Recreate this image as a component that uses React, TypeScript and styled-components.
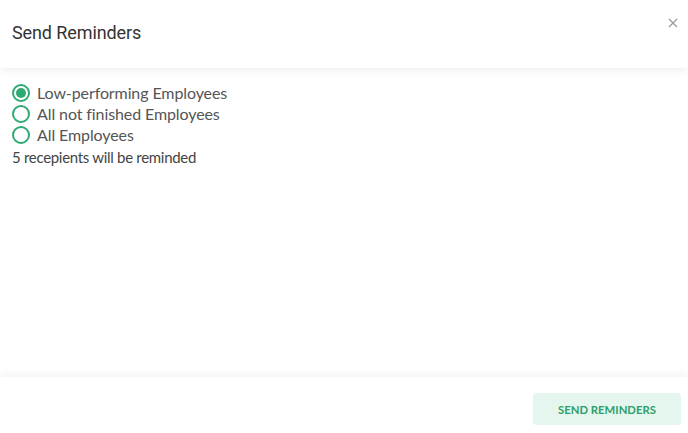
import { useState } from "react";
import styled, { createGlobalStyle } from "styled-components";

const GlobalStyle = createGlobalStyle`
  html, body {
    margin: 0;
    padding: 0;
    background: #fff;
  }
  body {
    font-family: Lato, "Noto Sans", sans-serif;
  }
`;

const options = [
  "Low-performing Employees",
  "All not finished Employees",
  "All Employees",
];

export default function App() {
  const [selected, setSelected] = useState(0);
  return (
    <Modal>
      <GlobalStyle />
      <Header>
        <Title>Send Reminders</Title>
        <Close aria-label="close">
          <svg width="10" height="10" viewBox="0 0 10 10">
            <path d="M1 1L9 9M9 1L1 9" stroke="#9a9a9a" strokeWidth="1.2" />
          </svg>
        </Close>
      </Header>
      <Body>
        {options.map((label, index) => (
          <Option key={index} onClick={() => setSelected(index)}>
            <Radio checked={selected === index} />
            <span>{label}</span>
          </Option>
        ))}
        <Note>5 recepients will be reminded</Note>
      </Body>
      <Footer>
        <SendButton>SEND REMINDERS</SendButton>
      </Footer>
    </Modal>
  );
}

const Modal = styled.div`
  width: 688px;
  height: 433px;
  display: flex;
  flex-direction: column;
  background: #fff;
  overflow: hidden;
`;

const Header = styled.div`
  height: 68px;
  flex-shrink: 0;
  display: flex;
  align-items: center;
  justify-content: space-between;
  padding: 0 10px 3px 12px;
  box-sizing: border-box;
  position: relative;
  z-index: 1;
  box-shadow: 0 3px 8px rgba(0, 0, 0, 0.06);
`;

const Title = styled.h2`
  margin: 0;
  font-family: Roboto, "Noto Sans", sans-serif;
  font-weight: 400;
  font-size: 18px;
  letter-spacing: -0.1px;
  color: #333;
`;

const Close = styled.button`
  align-self: flex-start;
  margin-top: 16px;
  border: none;
  background: none;
  padding: 0;
  cursor: pointer;
`;

const Body = styled.div`
  flex: 1;
  padding: 14px 12px 0;
  display: flex;
  flex-direction: column;
`;

const Option = styled.label`
  display: flex;
  align-items: center;
  gap: 7px;
  height: 21px;
  font-size: 16px;
  letter-spacing: -0.1px;
  color: #555;
  cursor: pointer;
`;

const Radio = styled.span<{ checked: boolean }>`
  width: 18px;
  height: 18px;
  box-sizing: border-box;
  border-radius: 50%;
  border: 2px solid #2eaa72;
  display: flex;
  align-items: center;
  justify-content: center;
  &::after {
    content: "";
    width: 10px;
    height: 10px;
    border-radius: 50%;
    background: ${(p) => (p.checked ? "#2eaa72" : "transparent")};
  }
`;

const Note = styled.div`
  font-size: 15px;
  letter-spacing: -0.3px;
  color: #444;
  margin-top: 1px;
  height: 21px;
  display: flex;
  align-items: center;
`;

const Footer = styled.div`
  height: 56px;
  flex-shrink: 0;
  display: flex;
  align-items: flex-start;
  justify-content: flex-end;
  padding: 16px 7px 0 0;
  box-sizing: border-box;
  box-shadow: 0 -3px 8px rgba(0, 0, 0, 0.05);
  background: #fff;
`;

const SendButton = styled.button`
  width: 148px;
  height: 32px;
  border: none;
  border-radius: 4px;
  background: #e5f6ee;
  color: #2e9e6a;
  font-family: Lato, "Noto Sans", sans-serif;
  font-weight: 700;
  font-size: 11.3px;
  cursor: pointer;
`;
